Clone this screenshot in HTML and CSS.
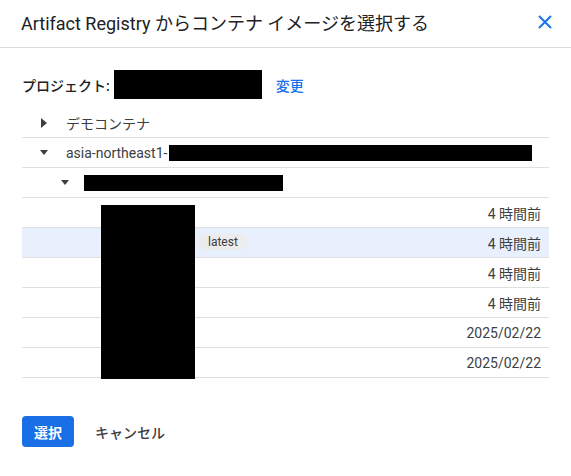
FILE: index.html
```html
<!DOCTYPE html>
<html lang="ja">
<head>
<meta charset="utf-8">
<link rel="stylesheet" href="styles.css">
</head>
<body>
<div class="dialog">
  <header class="header">
    <h1 class="title">Artifact Registry からコンテナ イメージを選択する</h1>
    <button class="close" aria-label="閉じる">
      <svg width="14" height="14" viewBox="0 0 14 14"><path d="M1 1L13 13M13 1L1 13" stroke="#1a73e8" stroke-width="2" fill="none"/></svg>
    </button>
  </header>
  <div class="content">
    <div class="project">
      <span class="project-label">プロジェクト:</span>
      <span class="redact redact-project"></span>
      <a class="change">変更</a>
    </div>
    <div class="tree">
      <div class="row lvl1">
        <span class="tri tri-right"></span>
        <span class="label">デモコンテナ</span>
      </div>
      <div class="row lvl1">
        <span class="tri tri-down"></span>
        <span class="label">asia-northeast1-</span>
        <span class="redact redact-repo"></span>
      </div>
      <div class="row lvl2">
        <span class="tri tri-down"></span>
        <span class="redact redact-pkg"></span>
      </div>
      <div class="images">
        <div class="row img"><span class="time">4 時間前</span></div>
        <div class="row img selected"><span class="chip">latest</span><span class="time">4 時間前</span></div>
        <div class="row img"><span class="time">4 時間前</span></div>
        <div class="row img"><span class="time">4 時間前</span></div>
        <div class="row img"><span class="time">2025/02/22</span></div>
        <div class="row img"><span class="time">2025/02/22</span></div>
        <span class="redact redact-digests"></span>
      </div>
    </div>
    <div class="actions">
      <button class="btn-primary">選択</button>
      <button class="btn-text">キャンセル</button>
    </div>
  </div>
</div>
</body>
</html>
```

FILE: styles.css
```css
* { box-sizing: border-box; }
html, body { margin: 0; padding: 0; background: #fff; }
body {
  font-family: Roboto, "Noto Sans CJK JP", sans-serif;
  color: #3c4043;
  width: 571px;
  height: 476px;
  overflow: hidden;
}
.header {
  height: 48px;
  border-bottom: 1px solid #dadce0;
  display: flex;
  align-items: center;
  justify-content: space-between;
  padding: 0 19px 4px 21px;
}
.title {
  margin: 0;
  font-size: 18px;
  font-weight: 400;
  color: #202124;
  letter-spacing: 0;
}
.close {
  border: 0;
  background: none;
  padding: 0;
  width: 14px;
  height: 14px;
  display: flex;
}
.content { padding: 0 22px; }
.project {
  margin-top: 22px;
  height: 29px;
  display: flex;
  align-items: center;
  font-size: 14px;
}
.project-label { font-weight: 500; color: #202124; margin-right: 4px; }
.redact { background: #000; display: inline-block; }
.redact-project { width: 148px; height: 29px; }
.change { color: #1a73e8; margin-left: 14px; font-weight: 500; }
.tree { margin-top: 9px; }
.row {
  height: 30px;
  border-bottom: 1px solid #e0e0e0;
  display: flex;
  align-items: center;
  font-size: 14px;
  color: #3c4043;
}
.lvl1 { padding-left: 18px; }
.lvl2 { padding-left: 39px; }
.tri { display: inline-block; width: 0; height: 0; }
.tri-right {
  border-top: 5px solid transparent;
  border-bottom: 5px solid transparent;
  border-left: 6px solid #3c4043;
  margin-left: 1px;
  margin-right: 19px;
}
.tri-down {
  border-left: 4px solid transparent;
  border-right: 4px solid transparent;
  border-top: 5px solid #3c4043;
  margin-right: 18px;
}
.lvl2 .tri-down { margin-right: 15px; }
.redact-repo { width: 363px; height: 16px; margin-left: 2px; }
.redact-pkg { width: 199px; height: 16px; }
.images { position: relative; }
.img { justify-content: flex-end; padding-right: 8px; position: relative; }
.selected { background: #e8f0fe; }
.chip {
  position: absolute;
  left: 176px;
  top: 6px;
  height: 16px;
  padding: 0 10px;
  border-radius: 8px;
  background: #ececec;
  font-size: 12px;
  line-height: 16px;
  color: #3c4043;
}
.time { font-size: 14px; color: #3c4043; }
.redact-digests {
  position: absolute;
  left: 79px;
  top: 7px;
  width: 94px;
  height: 174px;
}
.actions {
  margin-top: 38px;
  display: flex;
  align-items: center;
  gap: 21px;
}
.btn-primary {
  width: 52px;
  height: 31px;
  border: 0;
  border-radius: 4px;
  background: #1a6ee6;
  color: #fff;
  font-family: Roboto, "Noto Sans CJK JP", sans-serif;
  font-size: 14px;
  font-weight: 700;
  padding: 0;
}
.btn-text {
  border: 0;
  background: none;
  padding: 0;
  font-family: Roboto, "Noto Sans CJK JP", sans-serif;
  font-size: 14px;
  font-weight: 500;
  color: #3c4043;
}
```
